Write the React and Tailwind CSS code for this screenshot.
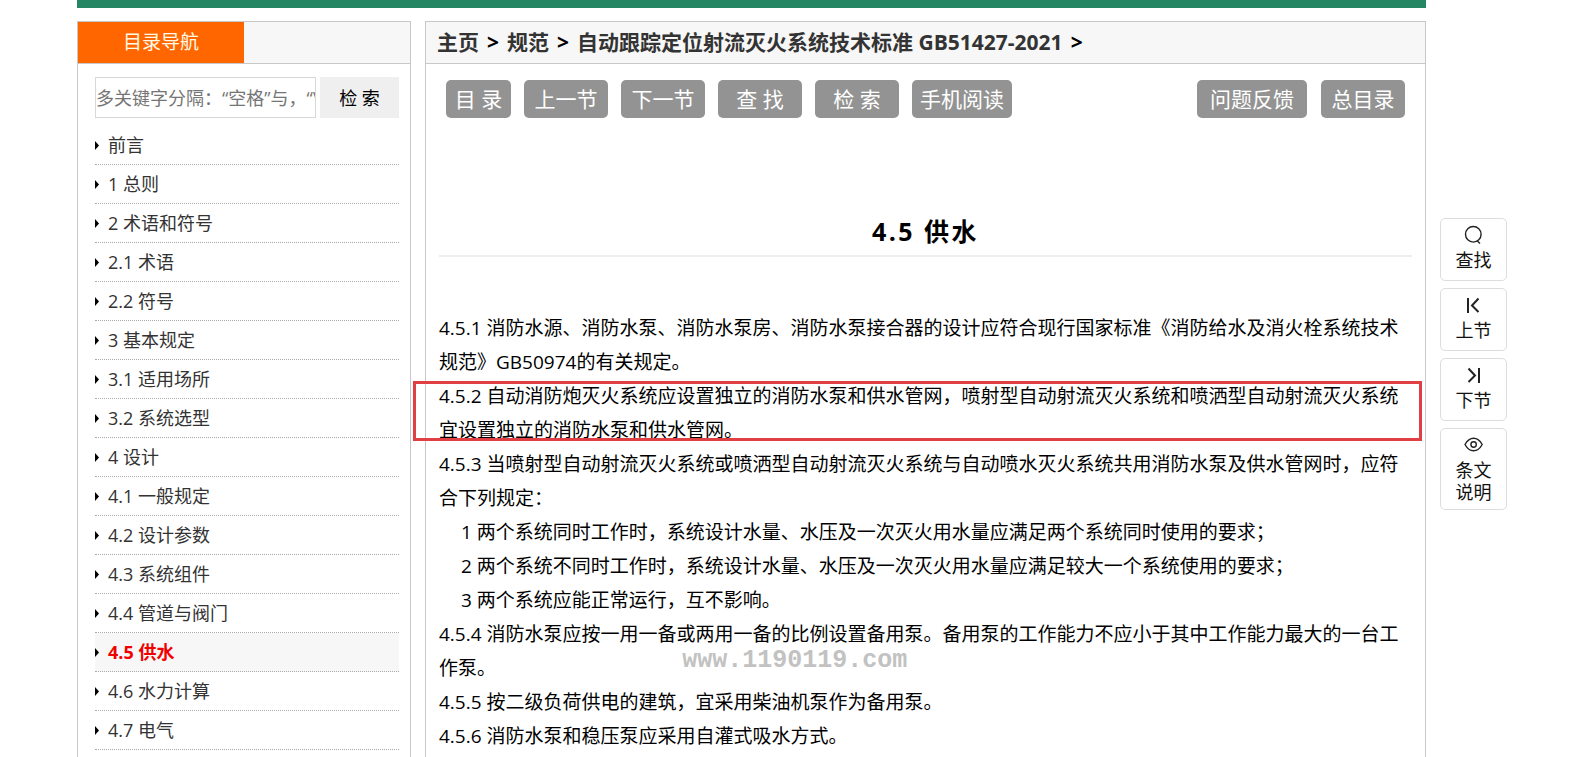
import React, { useState } from 'react';

const chapters = [
  '前言',
  '1 总则',
  '2 术语和符号',
  '2.1 术语',
  '2.2 符号',
  '3 基本规定',
  '3.1 适用场所',
  '3.2 系统选型',
  '4 设计',
  '4.1 一般规定',
  '4.2 设计参数',
  '4.3 系统组件',
  '4.4 管道与阀门',
  '4.5 供水',
  '4.6 水力计算',
  '4.7 电气'
];

const crumbs = ['主页', '规范', '自动跟踪定位射流灭火系统技术标准 GB51427-2021'];

const tools = [
  { name: '目 录', width: 'w-[65px]' },
  { name: '上一节', width: 'w-[84px]' },
  { name: '下一节', width: 'w-[84px]' },
  { name: '查 找', width: 'w-[84px]' },
  { name: '检 索', width: 'w-[84px]' },
  { name: '手机阅读', width: 'w-[100px]' }
];

const rightTools = [
  { name: '问题反馈', width: 'w-[110px]' },
  { name: '总目录', width: 'w-[84px]' }
];

const clauses = [
  { text: '4.5.1 消防水源、消防水泵、消防水泵房、消防水泵接合器的设计应符合现行国家标准《消防给水及消火栓系统技术规范》GB50974的有关规定。' },
  {
    text: '4.5.2 自动消防炮灭火系统应设置独立的消防水泵和供水管网，喷射型自动射流灭火系统和喷洒型自动射流灭火系统宜设置独立的消防水泵和供水管网。',
    marked: true
  },
  { text: '4.5.3 当喷射型自动射流灭火系统或喷洒型自动射流灭火系统与自动喷水灭火系统共用消防水泵及供水管网时，应符合下列规定：' },
  { text: '1 两个系统同时工作时，系统设计水量、水压及一次灭火用水量应满足两个系统同时使用的要求；', sub: true },
  { text: '2 两个系统不同时工作时，系统设计水量、水压及一次灭火用水量应满足较大一个系统使用的要求；', sub: true },
  { text: '3 两个系统应能正常运行，互不影响。', sub: true },
  {
    text: '4.5.4 消防水泵应按一用一备或两用一备的比例设置备用泵。备用泵的工作能力不应小于其中工作能力最大的一台工作泵。',
    watermark: true
  },
  { text: '4.5.5 按二级负荷供电的建筑，宜采用柴油机泵作为备用泵。' },
  { text: '4.5.6 消防水泵和稳压泵应采用自灌式吸水方式。' }
];

function SearchIcon() {
  return (
    <svg width="20" height="20" viewBox="0 0 20 20" fill="none" stroke="#222" strokeWidth="1.4">
      <circle cx="9.3" cy="9.3" r="7.8" />
      <path d="M13.4 16l2.6 2.6" />
    </svg>
  );
}

function PrevIcon() {
  return (
    <svg width="20" height="20" viewBox="0 0 20 20" fill="none" stroke="#222" strokeWidth="2">
      <path d="M4 3v15M14.5 3.500L8 10.500l6.500 6.500" />
    </svg>
  );
}

function NextIcon() {
  return (
    <svg width="20" height="20" viewBox="0 0 20 20" fill="none" stroke="#222" strokeWidth="2">
      <path d="M15 3v15M4.500 3.500l6.500 7-6.500 6.500" />
    </svg>
  );
}

function EyeIcon() {
  return (
    <svg width="20" height="20" viewBox="0 0 20 20" fill="none" stroke="#222" strokeWidth="1.4">
      <path d="M1 9.500C3.200 5.500 6 3.300 9.600 3.300S16 5.500 18.200 9.500C16 13.500 13.200 15.700 9.600 15.700S3.200 13.500 1 9.500z" />
      <circle cx="9.600" cy="9.500" r="2.700" />
    </svg>
  );
}

const railItems = [
  { lines: ['查找'], icon: SearchIcon },
  { lines: ['上节'], icon: PrevIcon },
  { lines: ['下节'], icon: NextIcon },
  { lines: ['条文', '说明'], icon: EyeIcon }
];

function ToolButton({ name, width }) {
  return (
    <button type="button" className={`h-[38px] shrink-0 rounded-[5px] bg-[#939393] text-[21px] leading-[38px] whitespace-nowrap text-white ${width}`}>
      {name}
    </button>
  );
}

function Sidebar() {
  const [keyword, setKeyword] = useState('');

  return (
    <aside className="w-[334px] shrink-0 border-x border-t border-[#c8c8c8]">
      <div className="flex h-[42px] border-b border-[#c8c8c8] bg-[#f7f7f7]">
        <h2 className="w-[166px] bg-[#ff6600] text-center text-[19px] leading-[41px] text-[#fffbe6]">目录导航</h2>
      </div>
      <form className="mt-[13px] flex gap-1 pr-[11px] pl-[17px]" onSubmit={(e) => e.preventDefault()}>
        <input
          type="text"
          aria-label="关键字"
          value={keyword}
          onChange={(e) => setKeyword(e.target.value)}
          placeholder="多关键字分隔：“空格”与，“\”或"
          className="h-[41px] min-w-0 flex-1 border border-[#d8d8d8] text-[18px] outline-none placeholder:text-[#757575]"
        />
        <button type="submit" className="w-[79px] bg-[#efefef] pt-[2px] text-[18px] text-black">
          检 索
        </button>
      </form>
      <ul className="mt-2 pr-[11px] pl-[17px]">
        {chapters.map((name) => {
          const active = name === '4.5 供水';
          return (
            <li key={name} className={`border-b border-dotted border-[#aaa] ${active ? 'bg-[#f7f7f7]' : ''}`}>
              <a href="#" className={`flex items-center gap-[9px] text-[18px] leading-[38px] ${active ? 'font-bold text-[#f00000]' : 'text-[#333]'}`}>
                <svg width="4" height="10" viewBox="0 0 4 10" fill="#000">
                  <path d="M0 1l4 4.500-4 4.500z" />
                </svg>
                {name}
              </a>
            </li>
          );
        })}
      </ul>
    </aside>
  );
}

function Clause({ text, sub, marked, watermark }) {
  return (
    <div className="relative">
      <p className={sub ? 'pl-[22px]' : ''}>{text}</p>
      {marked && <span className="absolute top-[2px] -right-[10px] -left-[26px] h-[60px] border-[3px] border-[#e04044]" />}
      {watermark && (
        <span className="absolute top-8 left-1/4 font-['Liberation_Mono',monospace] text-[25px] leading-6 font-bold text-[#c2c2c2]">
          www.1190119.com
        </span>
      )}
    </div>
  );
}

function Article() {
  return (
    <main className="min-w-0 flex-1 border-x border-t border-[#c8c8c8]">
      <nav className="flex h-[42px] items-center gap-2 border-b border-[#c8c8c8] bg-[#f7f7f7] px-[11px] text-[21px] font-bold text-[#333]">
        {crumbs.map((name) => (
          <React.Fragment key={name}>
            <a href="#">{name}</a>
            <span className="text-black">&gt;</span>
          </React.Fragment>
        ))}
      </nav>
      <div className="flex justify-between pt-4 pr-5 pl-5">
        <div className="flex gap-[13px]">
          {tools.map((tool) => (
            <ToolButton key={tool.name} {...tool} />
          ))}
        </div>
        <div className="flex gap-[14px]">
          {rightTools.map((tool) => (
            <ToolButton key={tool.name} {...tool} />
          ))}
        </div>
      </div>
      <div className="px-[13px]">
        <h1 className="mt-[93px] border-b-2 border-[#eee] pb-1 text-center text-[25px] leading-10 font-bold tracking-widest text-black">
          4.5 供水
        </h1>
        <article className="mt-[54px] text-[19px] leading-[34px] text-black">
          {clauses.map((clause) => (
            <Clause key={clause.text} {...clause} />
          ))}
        </article>
      </div>
    </main>
  );
}

export default function App() {
  return (
    <div className="flex min-h-screen gap-[14px] bg-white pr-16 pl-[77px] font-['Open_Sans','Noto_Sans_CJK_SC',sans-serif]">
      <div className="flex min-w-0 flex-1 flex-col">
        <header className="h-2 bg-[#258663]" />
        <div className="mt-[13px] flex flex-1 gap-[14px]">
          <Sidebar />
          <Article />
        </div>
      </div>
      <div className="flex w-[67px] shrink-0 flex-col gap-[7px] pt-[218px]">
        {railItems.map((item) => {
          const Icon = item.icon;
          return (
            <button
              key={item.lines[0]}
              type="button"
              className="flex min-h-[63px] flex-col items-center rounded-[5px] border border-[#ddd] py-[6px] text-[18px] leading-[22px] text-[#111]"
            >
              <Icon />
              <span className="pt-1">
                {item.lines.map((line) => (
                  <span key={line} className="block">{line}</span>
                ))}
              </span>
            </button>
          );
        })}
      </div>
    </div>
  );
}
